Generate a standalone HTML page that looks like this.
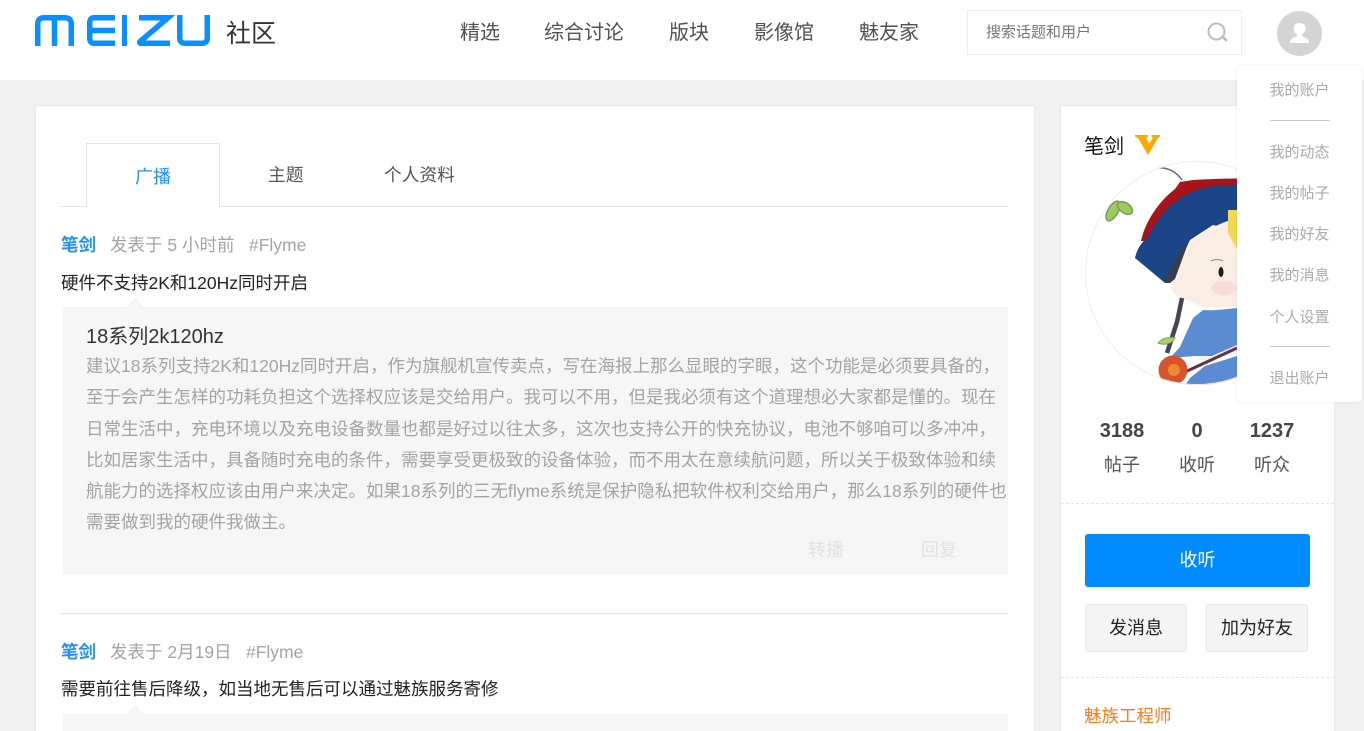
<!DOCTYPE html>
<html lang="zh">
<head>
<meta charset="utf-8">
<title>笔剑</title>
<style>
html{margin:0;padding:0;height:731px;overflow:hidden}
body{margin:0;padding:0;width:1364px;height:731px;overflow:hidden;position:relative;background:#f1f1f1;font-family:"Liberation Sans","Noto Sans CJK SC","WenQuanYi Zen Hei",sans-serif;color:#333}
.a{position:absolute;white-space:nowrap}
.box{position:absolute;box-sizing:border-box}
.nav{font-size:20px;color:#515151;top:21px;line-height:24px}
.t{left:86px;font-size:17.500px;line-height:25px;color:#a3a3a3}
.m{position:absolute;left:1237px;width:125px;text-align:center;font-size:15px;line-height:20px;color:#aaa}
.hr{position:absolute;left:1270px;width:60px;height:1px;background:#c8c8c8}
.st{font-weight:bold;font-size:20px;color:#444;top:419px;line-height:24px;text-align:center;width:70px}
.sl{font-size:18px;color:#555;top:453px;line-height:24px;text-align:center;width:70px}
.p{font-size:17.500px;line-height:24px}
</style>
</head>
<body>
<!-- header -->
<div class="box" style="left:0;top:0;width:1364px;height:80px;background:#fff"></div>
<svg class="box" style="left:35px;top:15px" width="176" height="31" viewBox="0 0 176 31" fill="none" stroke="#0a8fff" stroke-width="5.500">
<path d="M2.750 31V9Q2.750 2.750 9 2.750H30Q36.250 2.750 36.250 9V31M19.500 3V31"/>
<path d="M80 2.750H59Q54.750 2.750 54.750 8V23Q54.750 28.250 59 28.250H80M54 15.500H80"/>
<path d="M89.500 0V31" stroke-width="5"/>
<path d="M104 2.750H133L105 26.500Q104 28.250 106 28.250H135" stroke-width="5.500"/>
<path d="M144.750 0V23Q144.750 28.250 150 28.250H167Q172.250 28.250 172.250 23V0"/>
</svg>
<div class="a" style="left:226px;top:18px;font-size:25px;line-height:32px;color:#333">社区</div>
<div class="a nav" style="left:460px">精选</div>
<div class="a nav" style="left:544px">综合讨论</div>
<div class="a nav" style="left:669px">版块</div>
<div class="a nav" style="left:754px">影像馆</div>
<div class="a nav" style="left:859px">魅友家</div>
<div class="box" style="left:967px;top:10px;width:275px;height:45px;border:1px solid #ededed;background:#fff"></div>
<div class="a" style="left:986px;top:23px;font-size:15px;line-height:20px;color:#777">搜索话题和用户</div>
<svg class="box" style="left:1207px;top:22px" width="22" height="20" viewBox="0 0 22 20" fill="none" stroke="#bcbcbc"><circle cx="9.500" cy="9.500" r="8" stroke-width="2"/><path d="M16 15L20 19" stroke-width="2.500"/></svg>
<svg class="box" style="left:1277px;top:11px" width="45" height="45" viewBox="0 0 45 45"><circle cx="22.500" cy="22.500" r="22.500" fill="#d4d4d4"/><path d="M22.500 12C18.500 12 16.500 14.500 16.500 17.500C16.500 20 18 22 20 23.500C20.500 25 19 26 17 26.500C14.500 27.500 13 29 13 32H32C32 29 30.500 27.500 28 26.500C26 26 24.500 25 25 23.500C27 22 28.500 20 28.500 17.500C28.500 14.500 26.500 12 22.500 12Z" fill="#fff"/></svg>

<!-- main panel -->
<div class="box" style="left:35px;top:105px;width:1000px;height:640px;background:#fff;border:1px solid #e8e8e8"></div>
<div class="box" style="left:61px;top:206px;width:947px;height:1px;background:#e5e5e5"></div>
<div class="box" style="left:86px;top:143px;width:134px;height:64px;background:#fff;border:1px solid #e5e5e5;border-bottom:0"></div>
<div class="a" style="left:135px;top:165px;font-size:18px;line-height:24px;color:#1f8fff">广播</div>
<div class="a" style="left:268px;top:163px;font-size:17.700px;line-height:24px;color:#555">主题</div>
<div class="a" style="left:384px;top:163px;font-size:17.700px;line-height:24px;color:#555">个人资料</div>

<div class="a p" style="left:61px;top:233px;font-weight:bold;color:#1f8fff">笔剑</div>
<div class="a p" style="left:110px;top:233px;color:#a3a3a3">发表于 5 小时前</div>
<div class="a p" style="left:249px;top:233px;color:#a3a3a3">#Flyme</div>
<div class="a p" style="left:61px;top:271px;color:#222">硬件不支持2K和120Hz同时开启</div>

<div class="box" style="left:63px;top:308px;width:945px;height:267px;background:#f6f6f6;box-shadow:0 -1px 1px rgba(0,0,0,.05),0 0 1px rgba(0,0,0,.04)"></div>
<svg class="box" style="left:126px;top:297px" width="18" height="12" viewBox="0 0 18 12"><path d="M1 11.500L9 1.500L17 11.500Z" fill="#f6f6f6"/><path d="M1 11L9 1.500L17 11" fill="none" stroke="#eee" stroke-width="1"/><rect x="2" y="11" width="14" height="1" fill="#f6f6f6"/></svg>
<div class="a" style="left:86px;top:324px;font-size:20px;line-height:26px;color:#333">18系列2k120hz</div>
<div class="a t" style="top:354px">建议18系列支持2K和120Hz同时开启，作为旗舰机宣传卖点，写在海报上那么显眼的字眼，这个功能是必须要具备的，</div>
<div class="a t" style="top:385px">至于会产生怎样的功耗负担这个选择权应该是交给用户。我可以不用，但是我必须有这个道理想必大家都是懂的。现在</div>
<div class="a t" style="top:417px">日常生活中，充电环境以及充电设备数量也都是好过以往太多，这次也支持公开的快充协议，电池不够咱可以多冲冲，</div>
<div class="a t" style="top:448px">比如居家生活中，具备随时充电的条件，需要享受更极致的设备体验，而不用太在意续航问题，所以关于极致体验和续</div>
<div class="a t" style="top:479px">航能力的选择权应该由用户来决定。如果18系列的三无flyme系统是保护隐私把软件权利交给用户，那么18系列的硬件也</div>
<div class="a t" style="top:510px">需要做到我的硬件我做主。</div>
<div class="a" style="left:808px;top:538px;font-size:18px;line-height:24px;color:#e2e2e2">转播</div>
<div class="a" style="left:921px;top:538px;font-size:18px;line-height:24px;color:#e2e2e2">回复</div>

<div class="box" style="left:61px;top:613px;width:947px;height:1px;background:#e5e5e5"></div>
<div class="a p" style="left:61px;top:640px;font-weight:bold;color:#1f8fff">笔剑</div>
<div class="a p" style="left:110px;top:640px;color:#a3a3a3">发表于 2月19日</div>
<div class="a p" style="left:246px;top:640px;color:#a3a3a3">#Flyme</div>
<div class="a p" style="left:61px;top:677px;color:#222">需要前往售后降级，如当地无售后可以通过魅族服务寄修</div>
<div class="box" style="left:63px;top:715px;width:945px;height:30px;background:#f6f6f6;box-shadow:0 -1px 1px rgba(0,0,0,.05),0 0 1px rgba(0,0,0,.04)"></div>
<svg class="box" style="left:126px;top:704px" width="18" height="12" viewBox="0 0 18 12"><path d="M1 11.500L9 1.500L17 11.500Z" fill="#f6f6f6"/><path d="M1 11L9 1.500L17 11" fill="none" stroke="#eee" stroke-width="1"/><rect x="2" y="11" width="14" height="1" fill="#f6f6f6"/></svg>

<!-- side panel -->
<div class="box" style="left:1060px;top:105px;width:275px;height:640px;background:#fff;border:1px solid #e8e8e8"></div>
<div class="a" style="left:1084px;top:134px;font-size:20px;line-height:26px;color:#111">笔剑</div>
<svg class="box" style="left:1135px;top:135px" width="25" height="20" viewBox="0 0 25 20"><path d="M0 0H13V2H11L14 9L18 2.500H16.500V0H25V1.500L23 3L13 20L3 3L0 1.500Z" fill="#fba900"/></svg>
<svg class="box" style="left:1085px;top:161px" width="224" height="224" viewBox="0 0 224 224">
<defs><clipPath id="c"><circle cx="112" cy="112" r="112"/></clipPath></defs>
<g clip-path="url(#c)">
<rect width="224" height="224" fill="#fff"/>
<path d="M70 7C80 6 90 9 97 19" fill="none" stroke="#6a6a6a" stroke-width="1.500"/>
<ellipse cx="28" cy="50" rx="11" ry="5" transform="rotate(-60 28 50)" fill="#9ccc60" stroke="#7a9a55" stroke-width="1.500"/>
<ellipse cx="40" cy="47" rx="8.500" ry="5" transform="rotate(35 40 47)" fill="#9ccc60" stroke="#7a9a55" stroke-width="1.500"/>
<path d="M56 80C60 62 72 42 90 28L95 21L108 19C125 18 140 17 224 17V40H100L62 80Z" fill="#a81419"/>
<path d="M50 97C52 88 56 82 62 77C68 66 74 56 84 46C92 39 100 32 122 26C140 23 180 22 224 24V70H152L128 64L105 79L85 122L80 122Z" fill="#1c4488"/>
<path d="M104 80C100 90 95 105 90 118L85 122L78 120C84 112 90 100 96 88Z" fill="#3a3d4d"/>
<path d="M103 86C110 76 125 65 152 57V146L118 146C110 142 102 139 95 136C90 134 86 130 86 126C87 122 90 119 92 116C94 106 99 94 103 86Z" fill="#faeee2"/>
<path d="M143 49H152V88L143 72Z" fill="#f1d84c"/>
<ellipse cx="136" cy="111" rx="2.500" ry="5" fill="#1e1e1e"/>
<path d="M126 100C130 98 134 98 138 100" stroke="#888" stroke-width="1" fill="none"/>
<ellipse cx="139" cy="127" rx="13" ry="7" fill="#f8dcd8"/>
<path d="M97 137L92 161L82 192" stroke="#444655" stroke-width="4.500" fill="none"/>
<path d="M108 157L118 149C130 150 140 148 152 147V187L127 197L110 195L85 197L95 186Z" fill="#5b8bd0"/>
<path d="M110 195L127 195L152 184V192L120 203Z" fill="#f0f3fa"/>
<path d="M105 217L120 205L152 195V224H100Z" fill="#5b8bd0"/>
<path d="M73 182C78 176 85 176 90 177C88 182 80 185 73 182Z" fill="#a9d46c" stroke="#7ea84b"/>
<path d="M100 211L152 187" stroke="#61324a" stroke-width="3"/>
<circle cx="88" cy="209" r="14.500" fill="#d5542b"/>
<circle cx="89" cy="209" r="6" fill="#ee8a30"/>
</g>
<circle cx="112" cy="112" r="111.500" fill="none" stroke="#efefef"/>
</svg>

<!-- dropdown -->
<svg class="box" style="left:1291px;top:57px" width="18" height="10" viewBox="0 0 18 10"><path d="M1 9L9 1L17 9Z" fill="#fff"/></svg>
<div class="box" style="left:1237px;top:66px;width:125px;height:336px;background:#fff;border-radius:4px;box-shadow:0 0 2px rgba(0,0,0,.12)"></div>
<div class="m" style="top:81px">我的账户</div>
<div class="hr" style="top:120px"></div>
<div class="m" style="top:143px">我的动态</div>
<div class="m" style="top:184px">我的帖子</div>
<div class="m" style="top:225px">我的好友</div>
<div class="m" style="top:266px">我的消息</div>
<div class="m" style="top:308px">个人设置</div>
<div class="hr" style="top:346px"></div>
<div class="m" style="top:369px">退出账户</div>

<div class="a st" style="left:1087px">3188</div>
<div class="a st" style="left:1162px">0</div>
<div class="a st" style="left:1237px">1237</div>
<div class="a sl" style="left:1087px">帖子</div>
<div class="a sl" style="left:1162px">收听</div>
<div class="a sl" style="left:1237px">听众</div>

<div class="box" style="left:1061px;top:503px;width:273px;border-top:1px dashed #e6e6e6"></div>
<div class="box" style="left:1085px;top:534px;width:225px;height:53px;background:#008cff;border-radius:3px"></div>
<div class="a" style="left:1085px;top:548px;width:225px;text-align:center;font-size:18px;line-height:24px;color:#fff">收听</div>
<div class="box" style="left:1085px;top:604px;width:102px;height:48px;background:#f4f4f4;border:1px solid #e8e8e8;border-radius:3px;text-align:center;font-size:18px;line-height:46px;color:#222">发消息</div>
<div class="box" style="left:1206px;top:604px;width:102px;height:48px;background:#f4f4f4;border:1px solid #e8e8e8;border-radius:3px;text-align:center;font-size:18px;line-height:46px;color:#222">加为好友</div>
<div class="box" style="left:1061px;top:677px;width:273px;border-top:1px dashed #e6e6e6"></div>
<div class="a p" style="left:1084px;top:704px;color:#ff7a1a">魅族工程师</div>
</body>
</html>
